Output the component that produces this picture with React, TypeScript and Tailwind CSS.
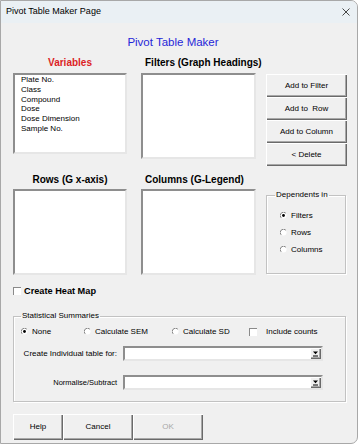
import React from "react";

// 3D borders in the old Windows forms look
const raised =
  "bg-[#f0f0f0] shadow-[inset_1px_1px_0_#ffffff,inset_-1px_-1px_0_#6a6a6a,inset_-2px_-2px_0_#a8a8a8]";
const sunken =
  "bg-white border-2 border-t-[#8e8e8e] border-l-[#8e8e8e] border-r-[#e6e6e6] border-b-[#e6e6e6]";
const frame =
  "border border-[#c2c2c2] shadow-[inset_1px_1px_0_#ffffff,1px_1px_0_#ffffff]";

const variables = ["Plate No.", "Class", "Compound", "Dose", "Dose Dimension", "Sample No."];

const Radio: React.FC<{ label: string; checked?: boolean; width?: string }> = ({
  label,
  checked = false,
  width = "",
}) => (
  <div className={`flex items-center h-[17px] ${width}`}>
    <svg width="7" height="7" viewBox="0 0 12 12" className="shrink-0">
      <circle cx="6" cy="6" r="5.2" fill="#ffffff" />
      <path d="M10 2 A5.6 5.6 0 0 0 2 10" stroke="#7e7e7e" strokeWidth="1.6" fill="none" />
      {checked && <circle cx="6" cy="6" r="2.4" fill="#000000" />}
    </svg>
    <span className="ml-[4px] text-[8px] leading-[10px] text-black whitespace-nowrap">{label}</span>
  </div>
);

const CheckBox: React.FC = () => (
  <span className="block w-[8px] h-[8px] shrink-0 bg-white border-t border-l border-[#8a8a8a] border-r-[#e0e0e0] border-b-[#e0e0e0]" />
);

const FormButton: React.FC<{ label: string; className?: string; disabled?: boolean }> = ({
  label,
  className = "",
  disabled = false,
}) => (
  <button
    className={`${raised} ${className} flex items-center justify-center text-[8px] leading-[10px] whitespace-pre ${
      disabled ? "text-[#a8a8a8]" : "text-black"
    }`}
  >
    {label}
  </button>
);

const Combo: React.FC = () => (
  <div className={`${sunken} w-[200px] h-[15px] flex justify-end`}>
    <div className={`${raised} w-[11px] h-full flex items-center justify-center`}>
      <svg width="7" height="7" viewBox="0 0 7 7">
        <path d="M1 1.5 H6 L3.5 4.2 Z" fill="#000000" />
        <rect x="1" y="5.5" width="5" height="1" fill="#000000" />
      </svg>
    </div>
  </div>
);

const App: React.FC = () => {
  return (
    <div className="w-[359px] h-[445px] bg-white font-['Liberation_Sans',Arial,sans-serif]">
      <div className="w-[358px] h-[444px] bg-[#f0f0f0] border border-[#a8a8a8] rounded-r-[7px] overflow-hidden">
        {/* Title bar */}
        <div className="h-[22px] bg-[#eaf0f4] flex items-center justify-between pl-[5px] pr-[7px]">
          <span className="text-[9px] text-black">Pivot Table Maker Page</span>
          <svg width="8" height="8" viewBox="0 0 8 8">
            <path d="M0.5 0.5 L7.5 7.5 M7.5 0.5 L0.5 7.5" stroke="#333333" strokeWidth="0.9" />
          </svg>
        </div>

        <h1 className="w-[344px] mt-[11px] text-center text-[11.5px] leading-[16px] text-[#2626d8]">
          Pivot Table Maker
        </h1>

        {/* Variables / Filters / buttons */}
        <div className="flex ml-[12px] mt-[7px]">
          <div className="w-[114px]">
            <div className="text-center text-[10px] leading-[12px] font-bold text-[#dc1f26]">Variables</div>
            <div className={`${sunken} mt-[4px] h-[81px] pl-[6px]`}>
              {variables.map((v) => (
                <div key={v} className="text-[8px] leading-[9.8px] text-black">
                  {v}
                </div>
              ))}
            </div>
          </div>
          <div className="w-[115px] ml-[14px]">
            <div className="pl-[4px] text-[10px] leading-[12px] font-bold text-black whitespace-nowrap">
              Filters (Graph Headings)
            </div>
            <div className={`${sunken} mt-[4px] h-[86px]`} />
          </div>
          <div className="w-[81px] ml-[10px] pt-[17px] flex flex-col">
            <FormButton label="Add to Filter" className="h-[23px]" />
            <FormButton label="Add to  Row" className="h-[23px]" />
            <FormButton label="Add to Column" className="h-[23px]" />
            <FormButton label="< Delete" className="h-[23px]" />
          </div>
        </div>

        {/* Rows / Columns / Dependents */}
        <div className="flex ml-[12px] mt-[8px]">
          <div className="w-[114px]">
            <div className="text-center text-[10px] leading-[12px] font-bold text-black">Rows (G x-axis)</div>
            <div className={`${sunken} mt-[3px] h-[86px]`} />
          </div>
          <div className="w-[115px] ml-[14px]">
            <div className="pl-[4px] text-[10px] leading-[12px] font-bold text-black whitespace-nowrap">
              Columns (G-Legend)
            </div>
            <div className={`${sunken} mt-[3px] h-[86px]`} />
          </div>
          <div className="ml-[10px] pt-[16px]">
            <fieldset className={`${frame} w-[80px] h-[84px]`}>
              <legend className="ml-[8px] px-[1px] text-[8px] leading-[10px] text-black">Dependents in</legend>
              <div className="pt-[7px] pl-[13px]">
                <Radio label="Filters" checked />
                <Radio label="Rows" />
                <Radio label="Columns" />
              </div>
            </fieldset>
          </div>
        </div>

        {/* Heat map */}
        <div className="flex items-center ml-[12px] mt-[10px] h-[12px]">
          <CheckBox />
          <span className="ml-[3px] text-[9.2px] leading-[12px] font-bold text-black">Create Heat Map</span>
        </div>

        {/* Statistical summaries */}
        <fieldset className={`${frame} ml-[12px] mt-[14px] w-[333px] h-[91px]`}>
          <legend className="ml-[7px] px-[1px] text-[8px] leading-[10px] text-black">Statistical Summaries</legend>
          <div className="pl-[7px]">
            <div className="flex items-center pt-[2px]">
              <Radio label="None" checked width="w-[63px]" />
              <Radio label="Calculate SEM" width="w-[88px]" />
              <Radio label="Calculate SD" width="w-[77px]" />
              <div className="flex items-center h-[17px]">
                <CheckBox />
                <span className="ml-[9px] text-[8px] leading-[10px] text-black">Include counts</span>
              </div>
            </div>
            <div className="flex items-center mt-[6px]">
              <span className="w-[96px] text-right text-[8px] leading-[10px] text-black whitespace-nowrap">
                Create Individual table for:
              </span>
              <div className="ml-[6px]">
                <Combo />
              </div>
            </div>
            <div className="flex items-center mt-[14px]">
              <span className="w-[96px] text-right text-[7.5px] leading-[10px] text-black">Normalise/Subtract</span>
              <div className="ml-[6px]">
                <Combo />
              </div>
            </div>
          </div>
        </fieldset>

        {/* Bottom buttons */}
        <div className="flex ml-[12px] mt-[12px]">
          <FormButton label="Help" className="w-[50px] h-[26px]" />
          <FormButton label="Cancel" className="w-[70px] h-[26px]" />
          <FormButton label="OK" className="w-[70px] h-[26px]" disabled />
        </div>
      </div>
    </div>
  );
};

export default App;
